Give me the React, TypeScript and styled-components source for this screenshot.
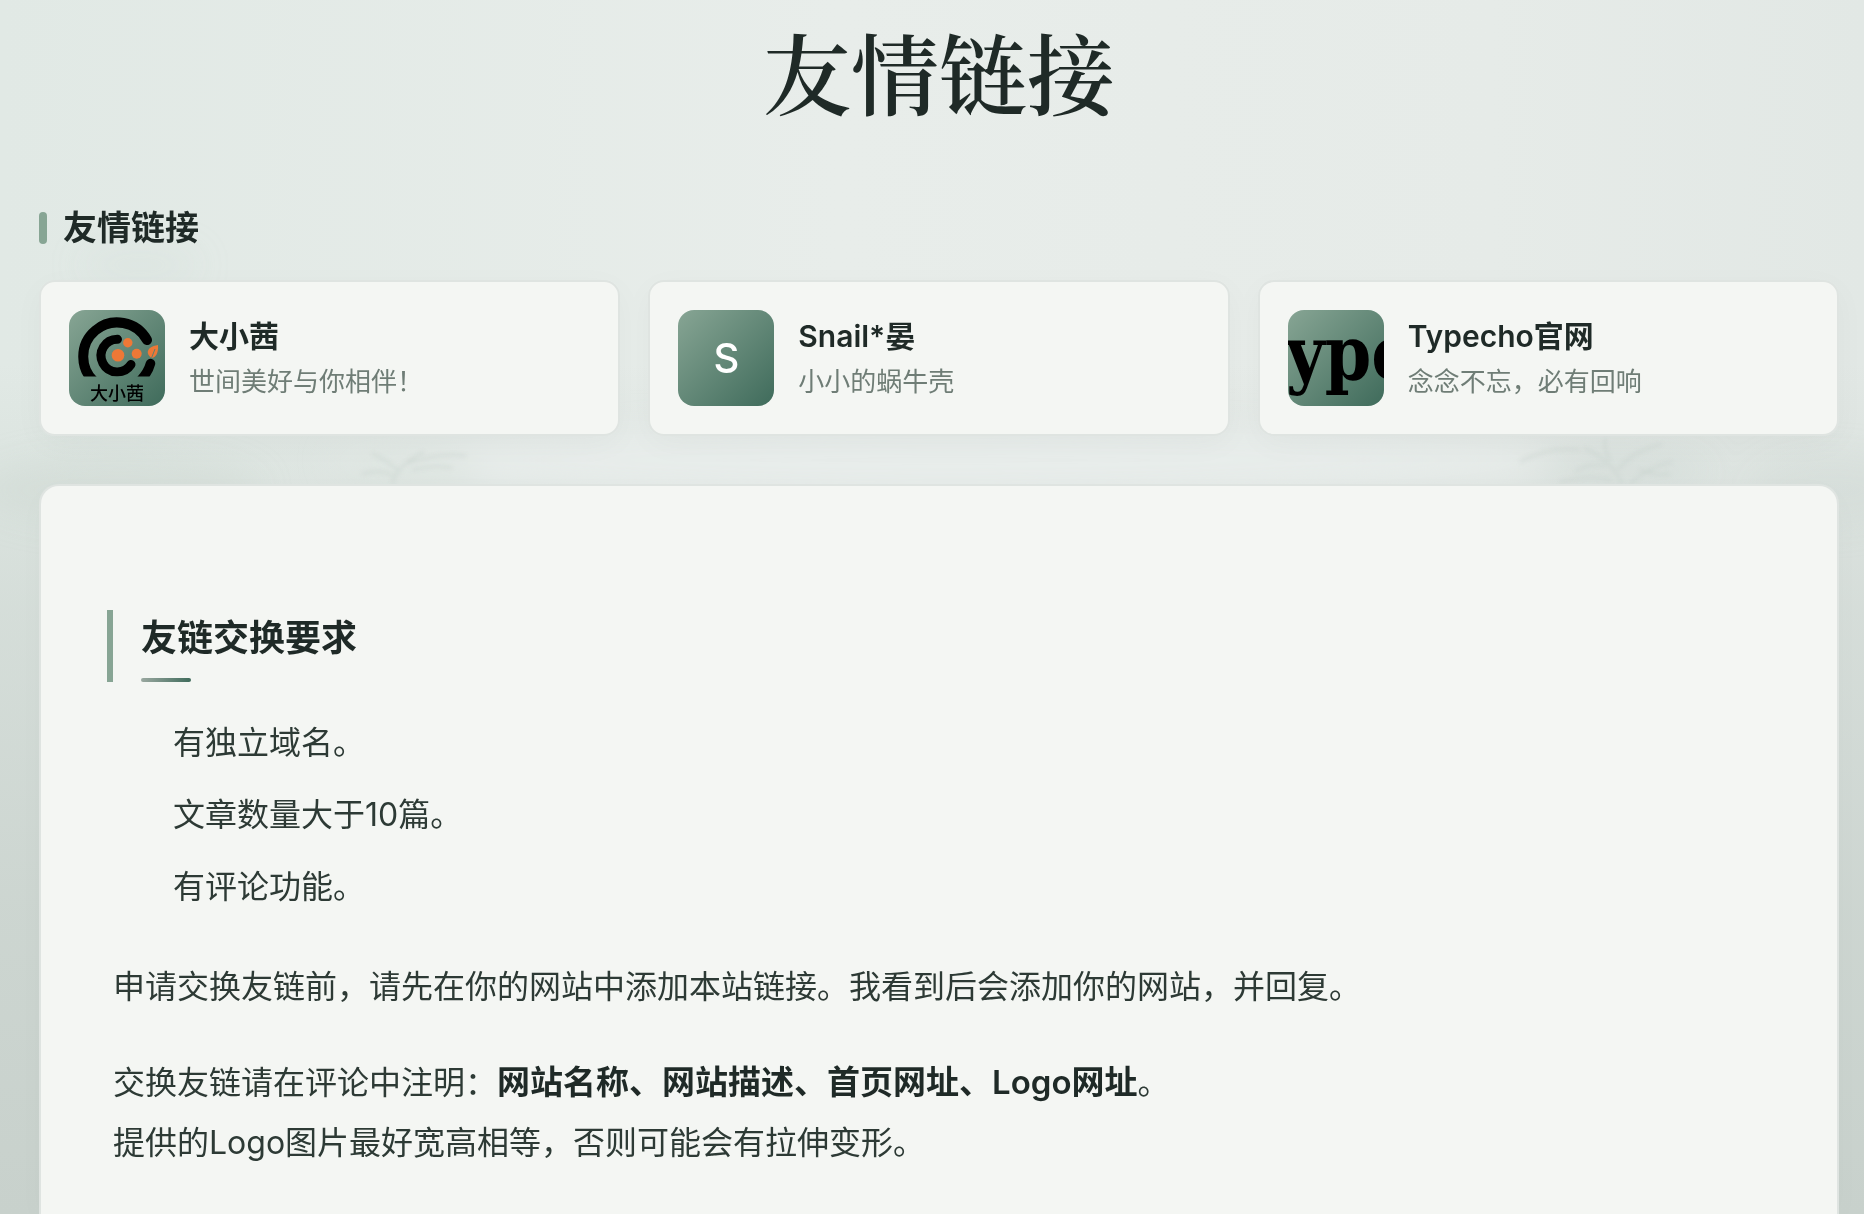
import React from "react";
import styled, { createGlobalStyle } from "styled-components";

const sans = `Inter, "Noto Sans CJK SC", sans-serif`;
const serif = `"Noto Serif CJK SC", "Noto Serif SC", "Songti SC", "Noto Sans CJK SC", serif`;
const ink = "#1f2a27";
const sage = "#87a594";
const pine = "#3f6b5b";
const paper = "#f4f6f3";
const edge = "#dfe4e1";

const GlobalStyle = createGlobalStyle`
  *, *::before, *::after { box-sizing: border-box; }
  body {
    margin: 0;
    background: #e4eae7;
    color: #2d3a35;
    font-family: ${sans};
    font-size: 32px;
    line-height: 60px;
  }
  h1, h2, h3, p, ul { margin: 0; padding: 0; }
`;

const Page = styled.div`
  position: relative;
  display: flex;
  flex-direction: column;
  min-height: 100vh;
  padding: 0 25px 0 39px;
  overflow: hidden;
`;

const Scenery = styled.svg`
  position: absolute;
  inset: 0;
  width: 100%;
  height: 100%;
`;

const Title = styled.h1`
  position: relative;
  padding-top: 4px;
  color: ${ink};
  font-family: ${serif};
  font-size: 88px;
  font-weight: 600;
  line-height: 132px;
  text-align: center;
`;

const Section = styled.section`
  position: relative;
  margin-top: 68px;
`;

const SectionTitle = styled.h2`
  display: flex;
  align-items: center;
  gap: 16px;
  color: ${ink};
  font-size: 34px;
  font-weight: 600;
  line-height: 48px;

  &::before {
    content: "";
    width: 8px;
    height: 32px;
    border-radius: 4px;
    background: ${sage};
  }
`;

const Grid = styled.div`
  display: grid;
  grid-template-columns: repeat(3, 1fr);
  gap: 28px;
  margin-top: 28px;
`;

const Card = styled.a`
  display: flex;
  align-items: center;
  gap: 24px;
  padding: 28px;
  border: 2px solid ${edge};
  border-radius: 16px;
  background: ${paper};
  box-shadow: 0 8px 32px rgba(31, 42, 39, 0.03);
  color: inherit;
  text-decoration: none;
`;

const Avatar = styled.span`
  display: flex;
  flex: none;
  align-items: center;
  justify-content: center;
  width: 96px;
  height: 96px;
  overflow: hidden;
  border-radius: 16px;
  background: linear-gradient(135deg, ${sage}, ${pine});
  color: #fff;
  font-size: 40px;
  font-weight: 500;
`;

const Info = styled.span`
  display: flex;
  flex-direction: column;
  gap: 4px;
  min-width: 0;
`;

const Name = styled.span`
  color: ${ink};
  font-size: 30px;
  font-weight: 600;
  line-height: 44px;
`;

const Description = styled.span`
  color: #6f7d76;
  font-size: 26px;
  line-height: 40px;
`;

const Panel = styled.article`
  position: relative;
  flex: 1;
  margin-top: 48px;
  padding: 124px 72px 40px;
  border: 2px solid ${edge};
  border-bottom: 0;
  border-radius: 20px 20px 0 0;
  background: ${paper};
  box-shadow: 0 8px 32px rgba(31, 42, 39, 0.02);
`;

const PanelTitle = styled.h2`
  margin-left: -6px;
  padding-left: 28px;
  border-left: 6px solid ${sage};
  color: ${ink};
  font-size: 36px;
  font-weight: 700;
  line-height: 56px;

  &::after {
    content: "";
    display: block;
    width: 50px;
    height: 4px;
    margin-top: 12px;
    border-radius: 2px;
    background: linear-gradient(90deg, #9aa8a0, ${pine});
  }
`;

const Rules = styled.ul`
  margin: 31px 0 40px;
  padding-left: 60px;
  list-style: none;
`;

const Rule = styled.li`
  & + & {
    margin-top: 12px;
  }
`;

const Paragraph = styled.p`
  & + & {
    margin-top: 35px;
  }
`;

const Strong = styled.strong`
  color: ${ink};
  font-size: 33px;
  font-weight: 600;
`;

function Backdrop() {
  return (
    <Scenery viewBox="0 0 1864 1214" preserveAspectRatio="none" aria-hidden="true">
      <defs>
        <linearGradient id="sky" x1="0" y1="0" x2="1" y2="0">
          <stop offset="0" stopColor="#e1e9e5" />
          <stop offset="0.45" stopColor="#e8edea" />
          <stop offset="0.8" stopColor="#e6ebe8" />
          <stop offset="1" stopColor="#e2e8e5" />
        </linearGradient>
        <linearGradient id="ground" x1="0" y1="0" x2="0" y2="1">
          <stop offset="0.3" stopColor="#c9d2cd" stopOpacity="0" />
          <stop offset="0.5" stopColor="#c9d2cd" stopOpacity="0.5" />
          <stop offset="0.75" stopColor="#c9d2cd" stopOpacity="0.85" />
          <stop offset="1" stopColor="#c8d1cc" stopOpacity="1" />
        </linearGradient>
        <filter id="mist" x="-30%" y="-30%" width="160%" height="160%">
          <feGaussianBlur stdDeviation="16" />
        </filter>
        <filter id="haze" x="-10%" y="-10%" width="120%" height="120%">
          <feGaussianBlur stdDeviation="2" />
        </filter>
      </defs>
      <rect width="1864" height="1214" fill="url(#sky)" />
      <rect width="1864" height="1214" fill="url(#ground)" />
      <g filter="url(#mist)" fill="#ccd6d0">
        <ellipse cx="950" cy="460" rx="620" ry="36" fill="#e7ecea" />
        <ellipse cx="120" cy="490" rx="140" ry="34" opacity="0.4" />
        <ellipse cx="410" cy="470" rx="70" ry="22" opacity="0.25" />
        <ellipse cx="1620" cy="470" rx="90" ry="22" opacity="0.35" />
        <ellipse cx="1830" cy="490" rx="80" ry="34" opacity="0.3" />
        <ellipse cx="140" cy="265" rx="60" ry="20" opacity="0.2" />
      </g>
      <g filter="url(#haze)" fill="none" stroke="#c2cec8" strokeWidth="2" opacity="0.5">
        <path d="M1622 484 Q1612 460 1584 448 M1618 470 Q1630 452 1662 444 M1610 460 Q1602 446 1606 438 M1630 484 Q1650 466 1672 462 M1520 462 Q1548 446 1580 450 M1575 472 Q1590 462 1606 466 M1560 482 Q1590 474 1612 480 M1640 470 Q1656 476 1670 474" />
        <path d="M392 484 Q398 464 424 452 M398 470 Q384 458 372 454 M404 464 Q442 452 466 456 M412 470 Q436 464 452 468 M362 474 Q380 468 394 476" />
      </g>
    </Scenery>
  );
}

function DaxiaoqianLogo() {
  return (
    <svg width="96" height="96" viewBox="0 0 96 96" role="img" aria-label="大小茜">
      <clipPath id="horizon">
        <rect width="96" height="66.5" />
      </clipPath>
      <g fill="none" stroke="#000" strokeLinecap="round" clipPath="url(#horizon)">
        <path d="M27 73 A34 34 0 1 1 78 30" strokeWidth="10" />
        <path d="M48.5 29.3 A16.3 16.3 0 1 0 62 54.5" strokeWidth="9" />
        <path d="M81.5 53.5 Q79 63 70 72" strokeWidth="9.5" />
      </g>
      <g fill="#ee7836">
        <circle cx="49" cy="45.3" r="6.3" />
        <circle cx="58.8" cy="32.7" r="4.7" />
        <circle cx="67.7" cy="43.7" r="5" />
        <path d="M89 35 C89.5 43 87 47 83 48 C77 45 76 37 89 35 Z" />
      </g>
      <path d="M86 39 L82.5 48" stroke="#5c8171" strokeWidth="1" />
      <text
        x="48"
        y="90"
        fill="#000"
        fontFamily={`"Noto Sans CJK SC", sans-serif`}
        fontSize="18"
        fontWeight="500"
        textAnchor="middle"
      >
        大小茜
      </text>
    </svg>
  );
}

function TypechoLogo() {
  return (
    <svg width="96" height="96" viewBox="0 0 96 96" role="img" aria-label="Typecho">
      <text
        x="-2"
        y="69"
        fill="#000"
        fontFamily={`"DejaVu Serif Condensed", "DejaVu Serif", serif`}
        fontSize="74"
        fontWeight="700"
      >
        ype
      </text>
    </svg>
  );
}

const friends = [
  { name: "大小茜", description: "世间美好与你相伴！", logo: <DaxiaoqianLogo /> },
  { name: "Snail*晏", description: "小小的蜗牛壳", logo: "S" },
  { name: "Typecho官网", description: "念念不忘，必有回响", logo: <TypechoLogo /> },
];

const rules = ["有独立域名。", "文章数量大于10篇。", "有评论功能。"];

export default function App() {
  return (
    <>
      <GlobalStyle />
      <Page lang="zh-CN">
        <Backdrop />
        <Title>友情链接</Title>
        <Section>
          <SectionTitle>友情链接</SectionTitle>
          <Grid>
            {friends.map((friend) => (
              <Card key={friend.name} href="#">
                <Avatar>{friend.logo}</Avatar>
                <Info>
                  <Name>{friend.name}</Name>
                  <Description>{friend.description}</Description>
                </Info>
              </Card>
            ))}
          </Grid>
        </Section>
        <Panel>
          <PanelTitle>友链交换要求</PanelTitle>
          <Rules>
            {rules.map((rule) => (
              <Rule key={rule}>{rule}</Rule>
            ))}
          </Rules>
          <Paragraph>
            申请交换友链前，请先在你的网站中添加本站链接。我看到后会添加你的网站，并回复。
          </Paragraph>
          <Paragraph>
            交换友链请在评论中注明：<Strong>网站名称、网站描述、首页网址、Logo网址</Strong>。
            <br />
            提供的Logo图片最好宽高相等，否则可能会有拉伸变形。
          </Paragraph>
        </Panel>
      </Page>
    </>
  );
}
